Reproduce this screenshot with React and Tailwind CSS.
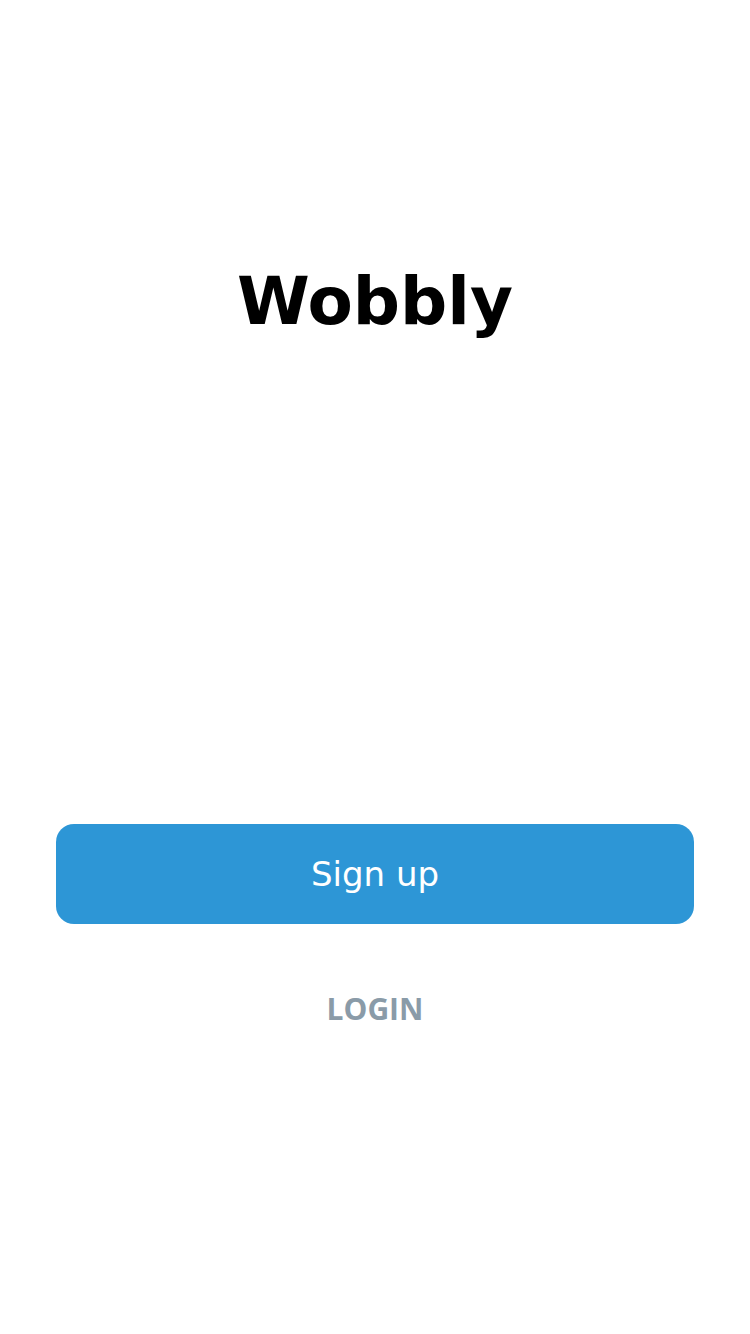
export default function App() {
  return (
    <div className="flex min-h-[1334px] w-[750px] flex-col items-center bg-white">
      <h1 className="mt-[262px] font-['DejaVu_Sans',sans-serif] text-[66px] font-bold leading-[80px] text-black">
        Wobbly
      </h1>

      <button className="mt-[482px] flex h-[100px] w-[638px] items-center justify-center rounded-[18px] bg-[#2d96d6] font-['DejaVu_Sans',sans-serif] text-[34px] text-white">
        Sign up
      </button>

      <button className="mt-[62px] font-['Open_Sans',sans-serif] text-[30px] font-bold text-[#8a9ba8]">
        LOGIN
      </button>
    </div>
  );
}
